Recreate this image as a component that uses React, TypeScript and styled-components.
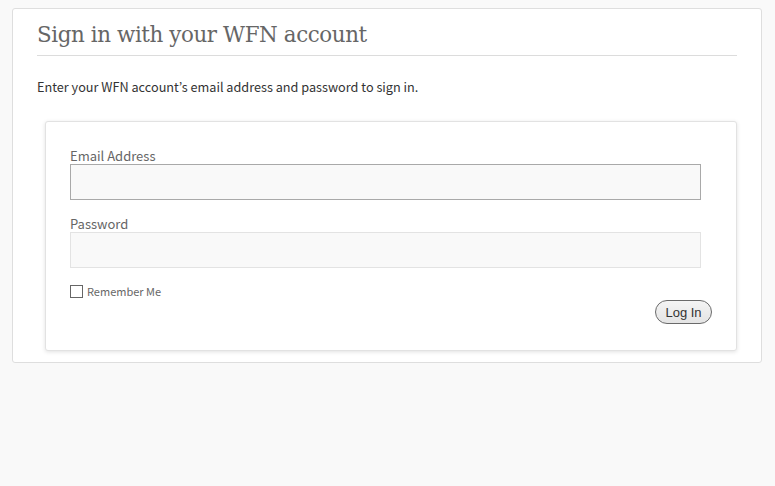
import React from "react";
import styled, { createGlobalStyle } from "styled-components";

const Global = createGlobalStyle`
  html, body { margin: 0; padding: 0; background: #f9f9f9; }
  body { font-family: "Noto Sans CJK JP", "Liberation Sans", sans-serif; }
`;

const Page = styled.div`
  padding: 8px 13px 0 12px;
`;

const Panel = styled.div`
  background: #fff;
  border: 1px solid #dedede;
  border-radius: 3px;
  padding: 12px 24px 11px 24px;
`;

const Title = styled.h1`
  margin: 0;
  font-family: "DejaVu Serif", Georgia, serif;
  font-weight: normal;
  font-size: 21.4px;
  line-height: 28px;
  color: #666;
  padding-bottom: 6px;
  border-bottom: 1px solid #dcdcdc;
  letter-spacing: -0.4px;
`;

const Intro = styled.p`
  margin: 22px 0 0 0;
  font-size: 12.7px;
  line-height: 18px;
  color: #333;
`;

const Card = styled.div`
  margin: 25px 0 0 8px;
  background: #fff;
  border: 1px solid #e2e2e2;
  border-radius: 3px;
  box-shadow: 0 1px 4px rgba(0, 0, 0, 0.12);
  padding: 25px 24px 26px 24px;
  display: flex;
  flex-direction: column;
`;

const Label = styled.label`
  font-size: 13px;
  line-height: 17px;
  color: #666;
  display: block;
`;

const Field = styled.div<{ $top?: number }>`
  margin-top: ${(p) => p.$top ?? 0}px;
  margin-right: 11px;
  display: flex;
  flex-direction: column;
`;

const Input = styled.input<{ $strong?: boolean }>`
  box-sizing: border-box;
  height: 36px;
  width: 100%;
  margin: 0;
  background: #f9f9f9;
  border: 1px solid ${(p) => (p.$strong ? "#a9a9a9" : "#e3e3e3")};
  outline: none;
`;

const CheckRow = styled.label`
  display: flex;
  align-items: center;
  gap: 4px;
  margin-top: 16px;
  font-size: 11px;
  color: #666;
  line-height: 14px;
`;

const Box = styled.span`
  width: 11px;
  height: 11px;
  border: 1px solid #666;
  background: #fff;
  display: inline-block;
`;

const Actions = styled.div`
  display: flex;
  justify-content: flex-end;
  margin-top: 2px;
`;

const Button = styled.button`
  box-sizing: border-box;
  font-family: "Liberation Sans", Arial, sans-serif;
  font-size: 13px;
  color: #333;
  height: 24px;
  width: 57px;
  padding: 0;
  border: 1px solid #6a6a6a;
  border-radius: 12px;
  background: linear-gradient(#f4f4f4, #e4e4e4);
`;

export default function App() {
  return (
    <Page>
      <Global />
      <Panel>
        <Title>Sign in with your WFN account</Title>
        <Intro>Enter your WFN account’s email address and password to sign in.</Intro>
        <Card>
          <Field>
            <Label>Email Address</Label>
            <Input $strong type="text" />
          </Field>
          <Field $top={15}>
            <Label>Password</Label>
            <Input type="password" />
          </Field>
          <CheckRow>
            <Box />
            Remember Me
          </CheckRow>
          <Actions>
            <Button>Log In</Button>
          </Actions>
        </Card>
      </Panel>
    </Page>
  );
}
